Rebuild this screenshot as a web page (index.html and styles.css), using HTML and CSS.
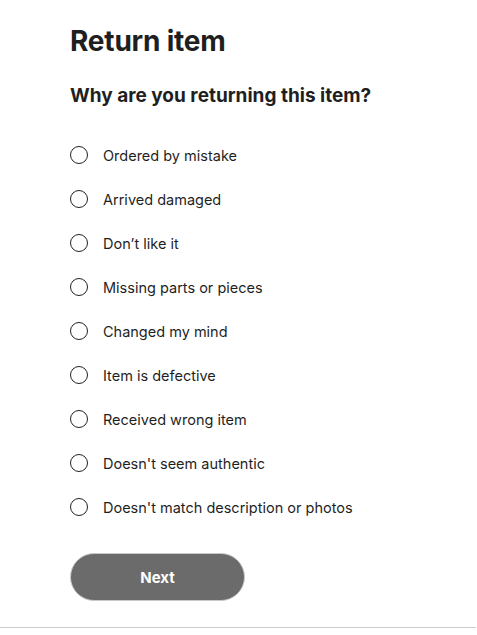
FILE: index.html
```html
<!DOCTYPE html>
<html>
<head>
<meta charset="utf-8">
<link rel="stylesheet" href="styles.css">
</head>
<body>
<div class="page">
  <h1 class="title">Return item</h1>
  <h2 class="subtitle">Why are you returning this item?</h2>
  <ul class="options">
    <li class="option"><span class="radio"></span><span class="label">Ordered by mistake</span></li>
    <li class="option"><span class="radio"></span><span class="label">Arrived damaged</span></li>
    <li class="option"><span class="radio"></span><span class="label">Don’t like it</span></li>
    <li class="option"><span class="radio"></span><span class="label">Missing parts or pieces</span></li>
    <li class="option"><span class="radio"></span><span class="label">Changed my mind</span></li>
    <li class="option"><span class="radio"></span><span class="label">Item is defective</span></li>
    <li class="option"><span class="radio"></span><span class="label">Received wrong item</span></li>
    <li class="option"><span class="radio"></span><span class="label">Doesn't seem authentic</span></li>
    <li class="option"><span class="radio"></span><span class="label">Doesn't match description or photos</span></li>
  </ul>
  <button class="next">Next</button>
</div>
<div class="divider"></div>
</body>
</html>
```
FILE: styles.css
```css
html, body {
  margin: 0;
  padding: 0;
  background: #fff;
}
body {
  font-family: Inter, "Noto Sans", sans-serif;
  color: #222;
  width: 477px;
  height: 635px;
  overflow: hidden;
}
.page {
  padding: 24px 0 0 70px;
  height: 627px;
  box-sizing: border-box;
}
.title {
  margin: 0;
  font-size: 28px;
  font-weight: 700;
  line-height: 34px;
  letter-spacing: -0.2px;
  color: #1f1f1f;
}
.subtitle {
  margin: 25px 0 0;
  font-size: 19px;
  font-weight: 700;
  line-height: 26px;
  color: #1f1f1f;
}
.options {
  list-style: none;
  margin: 24px 0 0;
  padding: 0;
}
.option {
  display: flex;
  align-items: center;
  height: 44px;
}
.radio {
  width: 16px;
  height: 16px;
  border: 1.5px solid #222;
  border-radius: 50%;
  flex: none;
}
.label {
  margin-left: 15px;
  font-size: 14.5px;
  color: #1f1f1f;
}
.next {
  margin-top: 24px;
  width: 175px;
  height: 48px;
  border-radius: 24px;
  border: 1px solid #c9c9c9;
  background: #6b6b6b;
  color: #fff;
  font-family: Inter, "Noto Sans", sans-serif;
  font-weight: 700;
  font-size: 15px;
  cursor: pointer;
}
.divider {
  height: 1px;
  width: 476px;
  background: #cccccc;
}
```
